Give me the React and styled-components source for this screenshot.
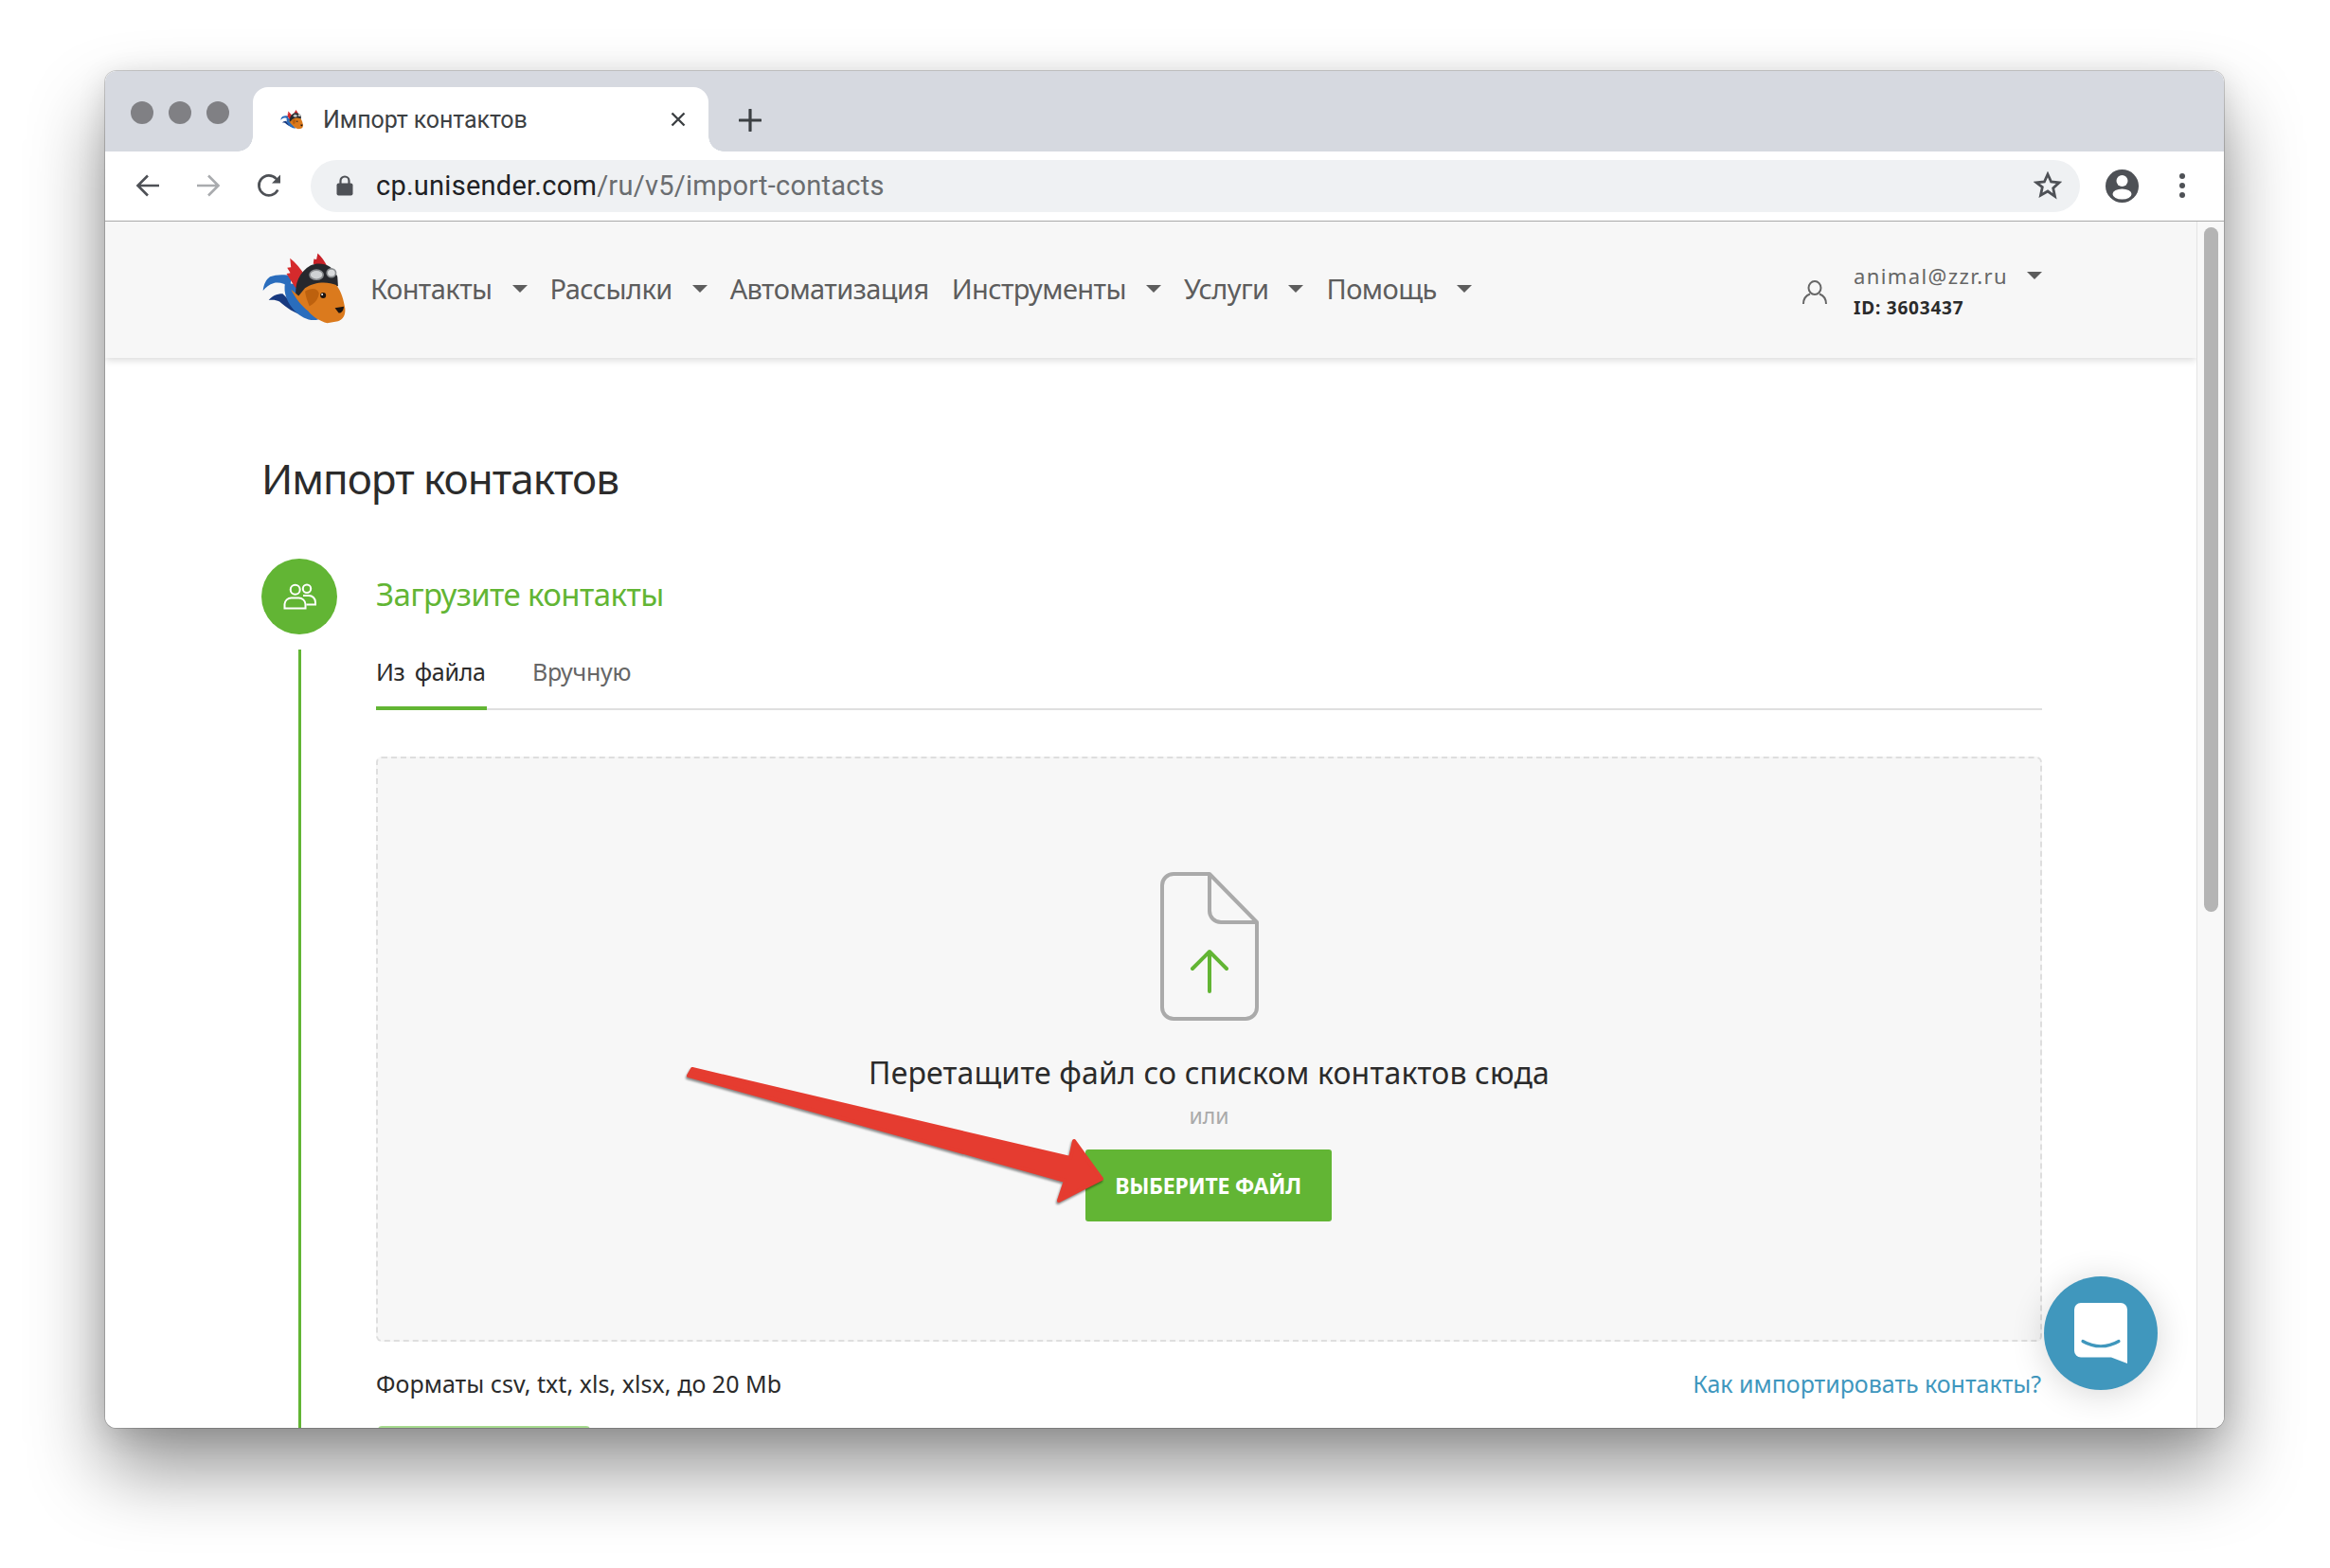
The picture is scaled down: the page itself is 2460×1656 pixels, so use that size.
import styled, { createGlobalStyle } from "styled-components";

const GREEN = "#62b534";
const BRAND = '"Noto Sans", "Open Sans", sans-serif';
const CHROME = 'Roboto, "Liberation Sans", sans-serif';

const Global = createGlobalStyle`
  html, body { margin: 0; background: #fff; }
  * { box-sizing: border-box; }
`;

const Page = styled.div`
  width: 2460px;
  height: 1656px;
  padding: 75px 112px 148px 111px;
  overflow: hidden;
`;
const Win = styled.div`
  position: relative;
  height: 100%;
  display: flex;
  flex-direction: column;
  border-radius: 12px;
  background: #fff;
  overflow: hidden;
`;
const WinShadow = styled.div`
  height: 100%;
  border-radius: 12px;
  box-shadow: 0 0 0 1px rgba(0, 0, 0, 0.18), 0 44px 80px rgba(0, 0, 0, 0.42),
    0 6px 30px rgba(0, 0, 0, 0.12);
`;

const TabStrip = styled.div`
  height: 85px;
  flex: none;
  display: flex;
  align-items: flex-start;
  padding-left: 27px;
  background: #d6d9e0;
`;
const Lights = styled.div`
  display: flex;
  gap: 16px;
  margin-top: 32px;
`;
const Light = styled.span`
  width: 24px;
  height: 24px;
  border-radius: 50%;
  background: #808084;
`;
const Tab = styled.div`
  position: relative;
  width: 481px;
  height: 68px;
  margin: 17px 0 0 25px;
  padding: 0 24px 0 28px;
  display: flex;
  align-items: center;
  background: #fff;
  border-radius: 16px 16px 0 0;
  font: 400 25px ${CHROME};
  color: #3c4043;
  &::before,
  &::after {
    content: "";
    position: absolute;
    bottom: 0;
    width: 16px;
    height: 16px;
  }
  &::before {
    left: -16px;
    background: radial-gradient(circle at 0 0, transparent 15.5px, #fff 16px);
  }
  &::after {
    right: -16px;
    background: radial-gradient(circle at 100% 0, transparent 15.5px, #fff 16px);
  }
`;
const TabTitle = styled.span`
  flex: 1;
  margin-left: 20px;
  letter-spacing: -0.1px;
`;
const PlusBtn = styled.svg`
  width: 24px;
  height: 24px;
  margin: 40px 0 0 32px;
`;

const Toolbar = styled.div`
  height: 74px;
  flex: none;
  display: flex;
  align-items: center;
  padding: 0 0 1px 32px;
  border-bottom: 1px solid #aaa;
`;
const NavIcon = styled.svg`
  width: 26px;
  height: 26px;
  margin-right: ${(p) => p.$gap}px;
  flex: none;
`;
const AddressBar = styled.div`
  width: 1868px;
  height: 55px;
  margin-right: 27px;
  padding: 0 19px 0 27px;
  display: flex;
  align-items: center;
  border-radius: 28px;
  background: #eff1f3;
  font: 400 29px ${CHROME};
`;
const Url = styled.div`
  flex: 1;
  margin-left: 24px;
  color: #6a6d70;
  letter-spacing: 0.25px;
  b {
    font-weight: 400;
    color: #202124;
  }
`;
const Dots = styled.div`
  display: flex;
  flex-direction: column;
  gap: 4px;
  margin-left: 43px;
  span {
    width: 6px;
    height: 6px;
    border-radius: 50%;
    background: #4e5156;
  }
`;

const Viewport = styled.div`
  flex: 1;
  min-height: 0;
  display: flex;
  position: relative;
`;
const Content = styled.div`
  flex: 1;
  min-width: 0;
  overflow: hidden;
  font-family: ${BRAND};
`;
const Scrollbar = styled.div`
  width: 29px;
  flex: none;
  padding: 6px 6px 0 7px;
  background: #f8f8f8;
  border-left: 1px solid #e4e4e4;
`;
const Thumb = styled.div`
  height: 723px;
  border-radius: 8px;
  background: #b4b4b4;
`;

const Header = styled.div`
  position: relative;
  height: 144px;
  padding: 0 0 0 165px;
  display: flex;
  align-items: center;
  background: #f7f7f7;
  box-shadow: 0 2px 8px rgba(0, 0, 0, 0.16);
`;
const Logo = styled.svg`
  width: 90px;
  height: 78px;
  margin-right: 25px;
  margin-top: -2px;
  flex: none;
`;
const Favicon = styled.svg`
  width: 26px;
  height: 22px;
  flex: none;
`;
const Menu = styled.nav`
  display: flex;
  flex: 1;
  gap: 24px;
  padding-bottom: 3px;
`;
const MenuItem = styled.a`
  display: flex;
  align-items: center;
  gap: 21px;
  font-size: 29px;
  letter-spacing: -0.57px;
  color: #5d5d5d;
`;
const Caret = styled.i`
  width: 0;
  height: 0;
  border-left: 8px solid transparent;
  border-right: 8px solid transparent;
  border-top: 8px solid #5d5d5d;
`;
const Account = styled.div`
  display: flex;
  align-items: center;
  width: 253px;
  margin-right: 163px;
`;
const AccountIcon = styled.svg`
  width: 26px;
  height: 26px;
  margin: 6px 28px 0 0;
`;
const AccountEmail = styled.div`
  display: flex;
  align-items: center;
  gap: 20px;
  height: 28px;
  margin-top: 3px;
  font-size: 22px;
  letter-spacing: 1.4px;
  color: #666;
`;
const AccountId = styled.div`
  margin-top: 7px;
  font-size: 19px;
  line-height: 26px;
  font-weight: 700;
  letter-spacing: 0.8px;
  color: #2b2b2b;
`;

const Main = styled.main`
  padding: 97px 163px 0 165px;
`;
const Title = styled.h1`
  margin: 0 0 55px;
  font-size: 44px;
  line-height: 60px;
  font-weight: 400;
  letter-spacing: -1px;
  color: #2b2b2b;
`;
const Step = styled.section`
  display: grid;
  grid-template-columns: 80px 1fr;
  column-gap: 41px;
`;
const Rail = styled.div`
  display: flex;
  flex-direction: column;
  align-items: center;
`;
const StepBadge = styled.div`
  width: 80px;
  height: 80px;
  flex: none;
  display: flex;
  align-items: center;
  justify-content: center;
  border-radius: 50%;
  background: ${GREEN};
`;
const RailLine = styled.div`
  width: 3px;
  flex: 1;
  margin-top: 16px;
  background: ${GREEN};
`;
const StepTitle = styled.h2`
  height: 80px;
  margin: 0;
  padding-bottom: 5px;
  display: flex;
  align-items: center;
  font-size: 33px;
  font-weight: 400;
  letter-spacing: -0.6px;
  color: ${GREEN};
`;
const Tabs = styled.div`
  display: flex;
  gap: 48px;
  height: 80px;
  padding-top: 24px;
  border-bottom: 2px solid #dfdfdf;
`;
const TabLink = styled.a`
  position: relative;
  width: ${(p) => p.$w}px;
  font-size: 25px;
  line-height: 30px;
  letter-spacing: -0.3px;
  word-spacing: 4px;
  color: ${(p) => (p.$active ? "#2b2b2b" : "#666")};
  ${(p) =>
    p.$active &&
    `&::after {
      content: "";
      position: absolute;
      left: 0;
      right: 0;
      top: 52px;
      height: 4px;
      background: ${GREEN};
    }`}
`;
const DropZone = styled.div`
  position: relative;
  height: 618px;
  margin-top: 49px;
  padding-top: 118px;
  display: flex;
  flex-direction: column;
  align-items: center;
  background: #f7f7f7;
  border: 2px dashed #dedede;
  border-radius: 6px;
`;
const DocIcon = styled.svg`
  width: 108px;
  height: 161px;
  flex: none;
`;
const DropText = styled.div`
  margin-top: 31px;
  font-size: 32px;
  line-height: 44px;
  letter-spacing: 0.15px;
  color: #2b2b2b;
`;
const OrText = styled.div`
  margin-top: 8px;
  font-size: 23px;
  line-height: 30px;
  color: #aaa;
`;
const PickButton = styled.button`
  width: 260px;
  height: 76px;
  margin: 21px 2px 0 0;
  flex: none;
  border: 0;
  border-radius: 3px;
  background: ${GREEN};
  font: 700 23px ${BRAND};
  letter-spacing: -0.25px;
  color: #fff;
`;
const PointerArrow = styled.svg`
  position: absolute;
  left: 321px;
  top: 324px;
  width: 455px;
  height: 155px;
  overflow: visible;
  filter: drop-shadow(-1px 2px 1px rgba(0, 0, 0, 0.45));
`;
const Footer = styled.div`
  display: flex;
  justify-content: space-between;
  margin-top: 29px;
  font-size: 25px;
  line-height: 30px;
`;
const Formats = styled.span`
  letter-spacing: 0.05px;
  color: #2b2b2b;
`;
const HelpLink = styled.a`
  margin-right: 1px;
  letter-spacing: -0.03px;
  color: #3f97be;
`;
const NextButton = styled.div`
  width: 224px;
  height: 60px;
  margin: 30px 0 0 2px;
  border-radius: 4px;
  background: #a6da8e;
`;
const ChatBubble = styled.div`
  position: absolute;
  left: 2047px;
  top: 1114px;
  width: 120px;
  height: 120px;
  display: flex;
  align-items: center;
  justify-content: center;
  border-radius: 50%;
  background: #4097bd;
  box-shadow: 0 4px 36px rgba(0, 0, 0, 0.16);
`;

const DogMark = () => (
  <>
    <path d="M50 160 C52 140 60 124 72 116 C92 108 120 108 140 114 L135 150 C118 136 98 132 84 136 C70 140 58 150 50 160Z" fill="#2a6dbd" />
    <path d="M68 190 C78 178 92 170 112 170 L180 238 C150 232 122 212 102 194 C90 188 78 188 68 190Z" fill="#17397f" />
    <path d="M120 134 L150 140 C165 185 190 225 225 250 C200 258 172 246 150 224 C128 200 112 168 120 134Z" fill="#2a6dbd" />
    <path d="M135 58 C152 72 170 92 182 112 L170 165 L150 148 L124 106 L136 104 L126 88 L138 86Z" fill="#d52a2c" />
    <path d="M208 76 L210 60 L218 62 L222 42 C234 54 244 66 252 84Z" fill="#c82228" />
    <path d="M154 180 C148 140 164 100 200 80 C232 68 270 78 284 116 L286 146 C240 142 200 152 180 192Z" fill="#26282d" />
    <path d="M138 156 L162 176 L182 152 C210 132 252 130 280 142 C296 160 304 190 308 216 C310 238 300 252 286 256 L252 262 C230 256 208 244 192 224 C172 208 152 184 138 156Z" fill="#db7a1d" />
    <path d="M182 162 C200 150 222 150 226 168 C224 190 206 204 196 208 C190 194 184 178 182 162Z" fill="#bd610e" />
    <ellipse cx="218" cy="110" rx="21" ry="15" fill="#cfd2d4" stroke="#8b8e91" strokeWidth="5" />
    <ellipse cx="265" cy="104" rx="14" ry="13" fill="#d9dbdd" stroke="#8b8e91" strokeWidth="5" />
    <circle cx="239" cy="175" r="9" fill="#1c1410" />
    <circle cx="236" cy="172" r="3" fill="#fff" />
    <path d="M276 214 L304 210 C304 222 296 232 288 230Z" fill="#1c1410" />
  </>
);

export default function App() {
  return (
    <Page>
      <Global />
      <WinShadow>
        <Win>
          <TabStrip>
            <Lights>
              <Light />
              <Light />
              <Light />
            </Lights>
            <Tab>
              <Favicon viewBox="40 30 275 240">
                <DogMark />
              </Favicon>
              <TabTitle>Импорт контактов</TabTitle>
              <svg width="16" height="16" viewBox="0 0 16 16">
                <path d="M1.5 1.5l13 13M14.5 1.5l-13 13" stroke="#3c4043" strokeWidth="2.4" />
              </svg>
            </Tab>
            <PlusBtn viewBox="0 0 24 24">
              <path d="M12 1v22M1 12h22" stroke="#3c4043" strokeWidth="3.2" strokeLinecap="round" />
            </PlusBtn>
          </TabStrip>

          <Toolbar>
            <NavIcon $gap={38} viewBox="0 0 26 26" fill="none" stroke="#4e5156" strokeWidth="2.6">
              <path d="M25 13H3M13 2.5L2.5 13 13 23.5" />
            </NavIcon>
            <NavIcon $gap={38} viewBox="0 0 26 26" fill="none" stroke="#a9abae" strokeWidth="2.6">
              <path d="M1 13h22M13 2.5L23.5 13 13 23.5" />
            </NavIcon>
            <NavIcon $gap={31} viewBox="0 0 26 26" fill="none" stroke="#4e5156" strokeWidth="2.7">
              <path d="M22.3 17.5A10.5 10.5 0 1 1 20.5 5.6L24 9" />
              <path d="M25 1.5V10.6H16Z" fill="#4e5156" stroke="none" />
            </NavIcon>
            <AddressBar>
              <svg width="18" height="22" viewBox="0 0 18 22">
                <path d="M4.5 9V6a4.5 4.5 0 0 1 9 0v3" fill="none" stroke="#4e5156" strokeWidth="2.2" />
                <rect x="0.5" y="8.5" width="17" height="13" rx="2" fill="#4e5156" />
              </svg>
              <Url>
                <b>cp.unisender.com</b>/ru/v5/import-contacts
              </Url>
              <svg width="30" height="30" viewBox="0 0 30 30">
                <path
                  d="M15 3l3.6 8 8.4.9-6.3 5.8 1.8 8.6L15 21l-7.5 4.3 1.8-8.6L3 11.9l8.4-.9z"
                  fill="none"
                  stroke="#4e5156"
                  strokeWidth="2.8"
                  strokeLinejoin="miter"
                />
              </svg>
            </AddressBar>
            <svg width="35" height="35" viewBox="0 0 35 35">
              <circle cx="17.5" cy="17.5" r="17.5" fill="#4e5156" />
              <circle cx="17.5" cy="12" r="6" fill="#fff" />
              <ellipse cx="17.5" cy="26" rx="10" ry="5.5" fill="#fff" />
            </svg>
            <Dots>
              <span />
              <span />
              <span />
            </Dots>
          </Toolbar>

          <Viewport>
            <Content>
              <Header>
                <Logo viewBox="45 38 268 232">
                  <DogMark />
                </Logo>
                <Menu>
                  <MenuItem>
                    Контакты <Caret />
                  </MenuItem>
                  <MenuItem>
                    Рассылки <Caret />
                  </MenuItem>
                  <MenuItem>Автоматизация</MenuItem>
                  <MenuItem>
                    Инструменты <Caret />
                  </MenuItem>
                  <MenuItem>
                    Услуги <Caret />
                  </MenuItem>
                  <MenuItem>
                    Помощь <Caret />
                  </MenuItem>
                </Menu>
                <Account>
                  <AccountIcon viewBox="0 0 26 26" fill="none" stroke="#666" strokeWidth="2">
                    <ellipse cx="13" cy="8" rx="6.5" ry="7" />
                    <path d="M1 25c0-6 3-9 7-10.5M25 25c0-6-3-9-7-10.5" />
                  </AccountIcon>
                  <div>
                    <AccountEmail>
                      animal@zzr.ru <Caret />
                    </AccountEmail>
                    <AccountId>ID: 3603437</AccountId>
                  </div>
                </Account>
              </Header>

              <Main>
                <Title>Импорт контактов</Title>
                <Step>
                  <Rail>
                    <StepBadge>
                      <svg width="35" height="28" viewBox="0 0 35 28" fill="none" stroke="#fff" strokeWidth="2">
                        <circle cx="12.7" cy="6.7" r="5" />
                        <path d="M1.5 26.5V22a7 7 0 0 1 7-6.5h8a7 7 0 0 1 7 6.5v4.5z" />
                        <circle cx="25" cy="5.7" r="4.2" />
                        <path d="M21 13h6a7 7 0 0 1 7 7v2.5h-9.5" />
                      </svg>
                    </StepBadge>
                    <RailLine />
                  </Rail>
                  <div>
                    <StepTitle>Загрузите контакты</StepTitle>
                    <Tabs>
                      <TabLink $active $w={117}>
                        Из файла
                      </TabLink>
                      <TabLink $w={110}>Вручную</TabLink>
                    </Tabs>
                    <DropZone>
                      <DocIcon viewBox="0 0 108 161" fill="none">
                        <path
                          d="M54 4H16A12 12 0 0 0 4 16v129a12 12 0 0 0 12 12h76a12 12 0 0 0 12-12V55zM54 4v39a12 12 0 0 0 12 12h38"
                          stroke="#aaa"
                          strokeWidth="4"
                          strokeLinejoin="round"
                        />
                        <path
                          d="M54 128V86M36 104l18-18 18 18"
                          stroke={GREEN}
                          strokeWidth="4"
                          strokeLinecap="round"
                          strokeLinejoin="round"
                        />
                      </DocIcon>
                      <DropText>Перетащите файл со списком контактов сюда</DropText>
                      <OrText>или</OrText>
                      <PickButton>ВЫБЕРИТЕ ФАЙЛ</PickButton>
                      <PointerArrow viewBox="0 0 455 155">
                        <path
                          d="M11 4L410 98 414 80 443 120 398 143 405 122 7 11Z"
                          fill="#e53c30"
                          stroke="#e53c30"
                          strokeWidth="4"
                          strokeLinejoin="round"
                        />
                      </PointerArrow>
                    </DropZone>
                    <Footer>
                      <Formats>Форматы csv, txt, xls, xlsx, до 20 Mb</Formats>
                      <HelpLink>Как импортировать контакты?</HelpLink>
                    </Footer>
                    <NextButton />
                  </div>
                </Step>
              </Main>
            </Content>
            <Scrollbar>
              <Thumb />
            </Scrollbar>
            <ChatBubble>
              <svg width="56" height="64" viewBox="0 0 56 64">
                <path d="M7 0h42a7 7 0 0 1 7 7v57l-17-6.500H7a7 7 0 0 1-7-7V7a7 7 0 0 1 7-7z" fill="#fff" />
                <path d="M9 40.500c12 7 26 7 38 0" fill="none" stroke="#4097bd" strokeWidth="3.200" strokeLinecap="round" />
              </svg>
            </ChatBubble>
          </Viewport>
        </Win>
      </WinShadow>
    </Page>
  );
}
